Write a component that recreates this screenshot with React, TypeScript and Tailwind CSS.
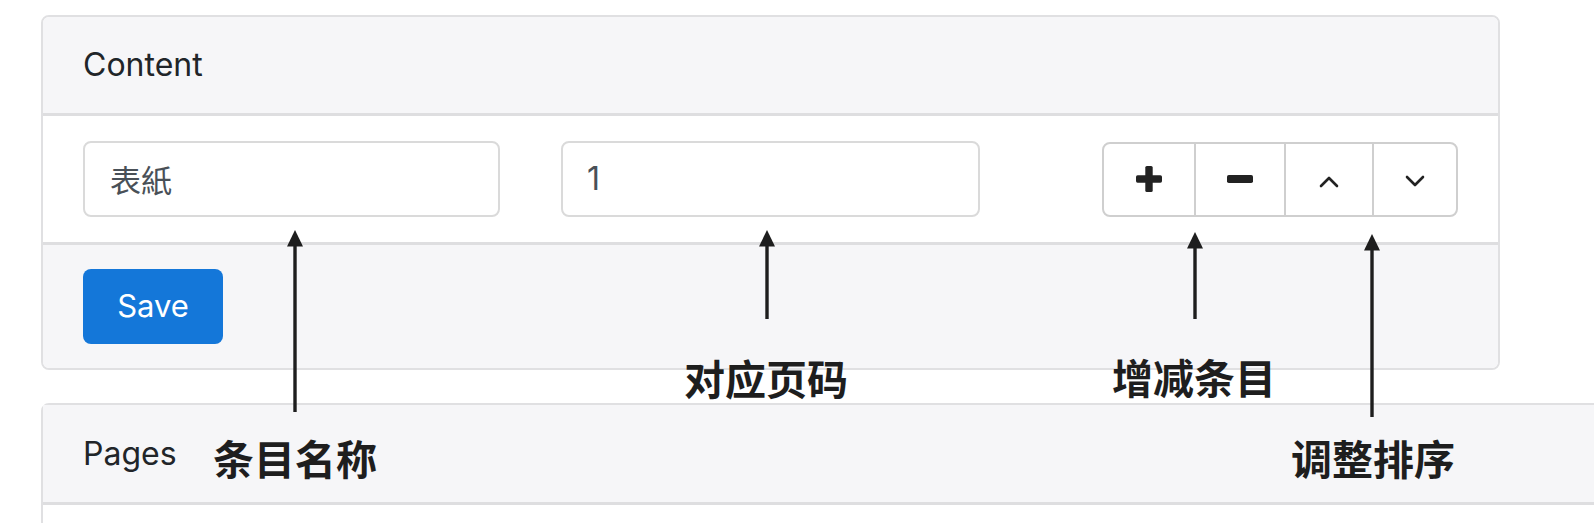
const ui = "font-['Inter','Liberation_Sans',sans-serif]";
const cjk = "font-['Noto_Sans_CJK_SC','Noto_Sans_CJK_JP',sans-serif]";

function Arrow({ x, top, bottom }: { x: number; top: number; bottom: number }) {
  const h = bottom - top;
  return (
    <svg
      className="pointer-events-none absolute"
      style={{ left: x - 9, top, width: 18, height: h }}
      viewBox={`0 0 18 ${h}`}
    >
      <path d="M9 0 L17 16.5 L1 16.5 Z" fill="#1e1e1e" />
      <rect x="7.3" y="14" width="3.4" height={h - 14} fill="#1e1e1e" />
    </svg>
  );
}

function Label({ x, y, text }: { x: number; y: number; text: string }) {
  return (
    <div
      className={`pointer-events-none absolute whitespace-nowrap text-[41px] font-bold leading-none text-[#1e1e1e] ${cjk}`}
      style={{ left: x, top: y - 22 }}
    >
      {text}
    </div>
  );
}

function PlusIcon() {
  return (
    <svg width="26" height="26" viewBox="0 0 26 26" fill="#222">
      <rect x="9.3" y="0" width="7.4" height="26" rx="1.6" />
      <rect x="0" y="9.3" width="26" height="7.4" rx="1.6" />
    </svg>
  );
}

function MinusIcon() {
  return (
    <svg width="26" height="8" viewBox="0 0 26 8" fill="#222">
      <rect x="0" y="0" width="26" height="8" rx="1.8" />
    </svg>
  );
}

function Chevron({ up }: { up?: boolean }) {
  return (
    <svg width="20" height="12" viewBox="0 0 20 12" fill="none" stroke="#222" strokeWidth="2.6" strokeLinecap="round" strokeLinejoin="round">
      <path d={up ? "M2 10 L10 2 L18 10" : "M2 2 L10 10 L18 2"} />
    </svg>
  );
}

export default function App() {
  return (
    <div className="relative h-[523px] w-full overflow-hidden bg-white">
      <div className="flex flex-col pl-[41px] pt-[15px]">
        {/* content card */}
        <div className="w-[1459px] overflow-hidden rounded-[8px] border-2 border-[#e0e0e2] bg-white">
          <div className="flex h-[99px] items-center border-b-[3px] border-[#dedee0] bg-[#f6f6f8] px-[40px]">
            <span className={`text-[32px] text-[#212529] ${ui}`}>Content</span>
          </div>
          <div className="flex items-center px-[40px] py-[25px]">
            <div className="flex h-[76px] w-[417px] items-center rounded-[8px] border-2 border-[#dadada] px-[25px]">
              <span className={`text-[31px] text-[#495057] ${cjk}`}>表紙</span>
            </div>
            <div className="ml-[61px] flex h-[76px] w-[419px] items-center rounded-[8px] border-2 border-[#dadada] px-[24px]">
              <span className={`text-[32px] text-[#495057] ${ui}`}>1</span>
            </div>
            <div className="ml-auto flex h-[75px] overflow-hidden rounded-[8px] border-2 border-[#cfcfcf]">
              <div className="flex w-[92px] items-center justify-center border-r-2 border-[#cfcfcf]">
                <PlusIcon />
              </div>
              <div className="flex w-[90px] items-center justify-center border-r-2 border-[#cfcfcf]">
                <MinusIcon />
              </div>
              <div className="flex w-[88px] items-center justify-center border-r-2 border-[#cfcfcf] pt-[5px]">
                <Chevron up />
              </div>
              <div className="flex w-[82px] items-center justify-center pt-[4px]">
                <Chevron />
              </div>
            </div>
          </div>
          <div className="border-t-[3px] border-[#dedee0] bg-[#f6f6f8] px-[40px] py-[24px]">
            <div className={`flex h-[75px] w-[140px] items-center justify-center rounded-[8px] bg-[#1477d9] text-[31px] text-white ${ui}`}>
              Save
            </div>
          </div>
        </div>

        {/* pages card */}
        <div className="mt-[33px] w-[1600px] rounded-tl-[8px] border-2 border-[#e0e0e2] bg-white">
          <div className="flex h-[100px] items-center border-b-[3px] border-[#dedee0] bg-[#f6f6f8] px-[40px]">
            <span className={`text-[32px] text-[#212529] ${ui}`}>Pages</span>
          </div>
          <div className="h-[40px]" />
        </div>
      </div>

      {/* annotations */}
      <Arrow x={295} top={230} bottom={412} />
      <Arrow x={767} top={230} bottom={319} />
      <Arrow x={1195} top={232} bottom={319} />
      <Arrow x={1372} top={234} bottom={417} />
      <Label x={213} y={459} text="条目名称" />
      <Label x={684} y={379} text="对应页码" />
      <Label x={1112} y={378} text="增减条目" />
      <Label x={1291} y={459} text="调整排序" />
    </div>
  );
}
